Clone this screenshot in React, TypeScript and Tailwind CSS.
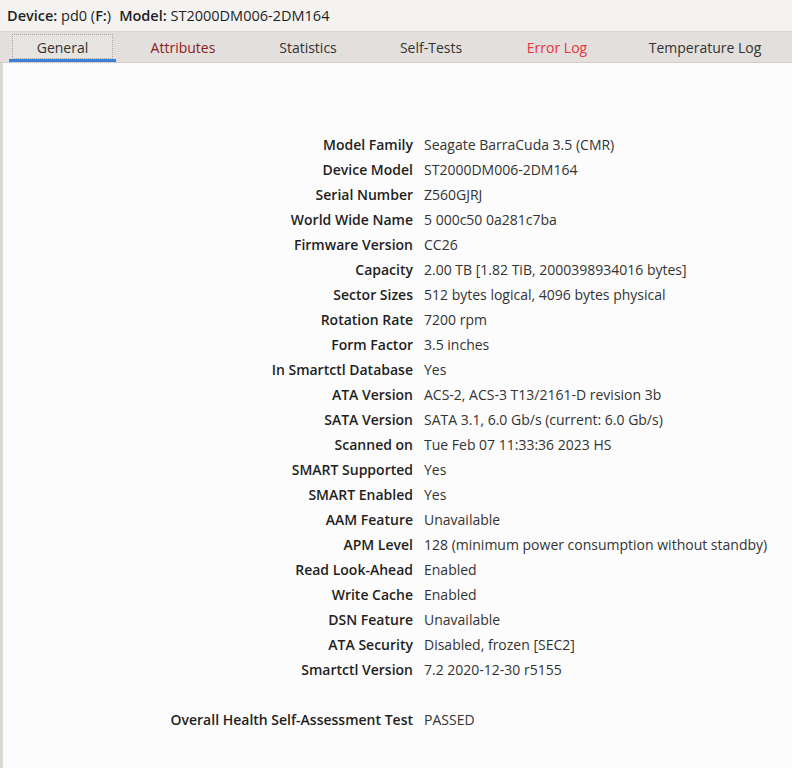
import { useState } from 'react'

const tabs = [
  { name: 'General', w: 'w-[107px]', color: 'text-[#333333]' },
  { name: 'Attributes', w: 'w-[134px]', color: 'text-[#8b1c1c]' },
  { name: 'Statistics', w: 'w-[116px]', color: 'text-[#333333]' },
  { name: 'Self-Tests', w: 'w-[130px]', color: 'text-[#333333]' },
  { name: 'Error Log', w: 'w-[122px]', color: 'text-[#e8323c]' },
  { name: 'Temperature Log', w: 'w-[174px]', color: 'text-[#333333]' },
]

const info: [string, string][] = [
  ['Model Family', 'Seagate BarraCuda 3.5 (CMR)'],
  ['Device Model', 'ST2000DM006-2DM164'],
  ['Serial Number', 'Z560GJRJ'],
  ['World Wide Name', '5 000c50 0a281c7ba'],
  ['Firmware Version', 'CC26'],
  ['Capacity', '2.00 TB [1.82 TiB, 2000398934016 bytes]'],
  ['Sector Sizes', '512 bytes logical, 4096 bytes physical'],
  ['Rotation Rate', '7200 rpm'],
  ['Form Factor', '3.5 inches'],
  ['In Smartctl Database', 'Yes'],
  ['ATA Version', 'ACS-2, ACS-3 T13/2161-D revision 3b'],
  ['SATA Version', 'SATA 3.1, 6.0 Gb/s (current: 6.0 Gb/s)'],
  ['Scanned on', 'Tue Feb 07 11:33:36 2023 HS'],
  ['SMART Supported', 'Yes'],
  ['SMART Enabled', 'Yes'],
  ['AAM Feature', 'Unavailable'],
  ['APM Level', '128 (minimum power consumption without standby)'],
  ['Read Look-Ahead', 'Enabled'],
  ['Write Cache', 'Enabled'],
  ['DSN Feature', 'Unavailable'],
  ['ATA Security', 'Disabled, frozen [SEC2]'],
  ['Smartctl Version', '7.2 2020-12-30 r5155'],
]

function Row({ label, value }: { label: string; value: string }) {
  return (
    <>
      <div className="h-[25px] flex items-center justify-end font-semibold text-[#1f1f1f]">{label}</div>
      <div className="h-[25px] flex items-center text-[#333333]">{value}</div>
    </>
  )
}

export default function App() {
  const [active, setActive] = useState('General')

  return (
    <div
      className="w-[792px] h-[768px] overflow-hidden bg-[#f4f3f1] text-[14px] leading-none"
      style={{ fontFamily: '"Open Sans", "Noto Sans", sans-serif' }}
    >
      {/* device header */}
      <div className="h-[31px] flex items-center pl-[7px] pt-[2px] text-[#1f1f1f] text-[14.5px] whitespace-pre">
        <span className="font-semibold">Device:</span>
        <span> pd0 (</span>
        <span className="font-semibold">F:</span>
        <span>)</span>
        <span className="w-[8px]" />
        <span className="font-semibold">Model:</span>
        <span> ST2000DM006-2DM164</span>
      </div>

      {/* tab strip */}
      <div className="h-[32px] flex border-t border-[#d6d2ce] border-b border-b-[#d0ccc8] bg-[#e2dfdc] pl-[9px]">
        {tabs.map((t) => (
          <button
            key={t.name}
            onClick={() => setActive(t.name)}
            className={`${t.w} relative shrink-0 flex items-center justify-center pt-[1px] ${t.color}`}
          >
            {active === t.name && (
              <>
                <span className="absolute left-[3px] right-[3px] top-[2px] bottom-[3px] border border-dotted border-[#a8a4a0] bg-[#e6e4e1]" />
                <span className="absolute left-0 right-0 bottom-0 h-[3px] bg-[#3b7fd9]" />
              </>
            )}
            <span className="relative">{t.name}</span>
          </button>
        ))}
      </div>

      {/* general info panel */}
      <div className="h-[705px] border-l-[3px] border-[#dcd8d4] bg-[#fcfcfc] pt-[69px]">
        <div className="grid grid-cols-[410px_1fr] gap-x-[11px]">
          {info.map(([l, v]) => (
            <Row key={l} label={l} value={v} />
          ))}
          <div className="h-[25px]" />
          <div className="h-[25px]" />
          <Row label="Overall Health Self-Assessment Test" value="PASSED" />
        </div>
      </div>
    </div>
  )
}
